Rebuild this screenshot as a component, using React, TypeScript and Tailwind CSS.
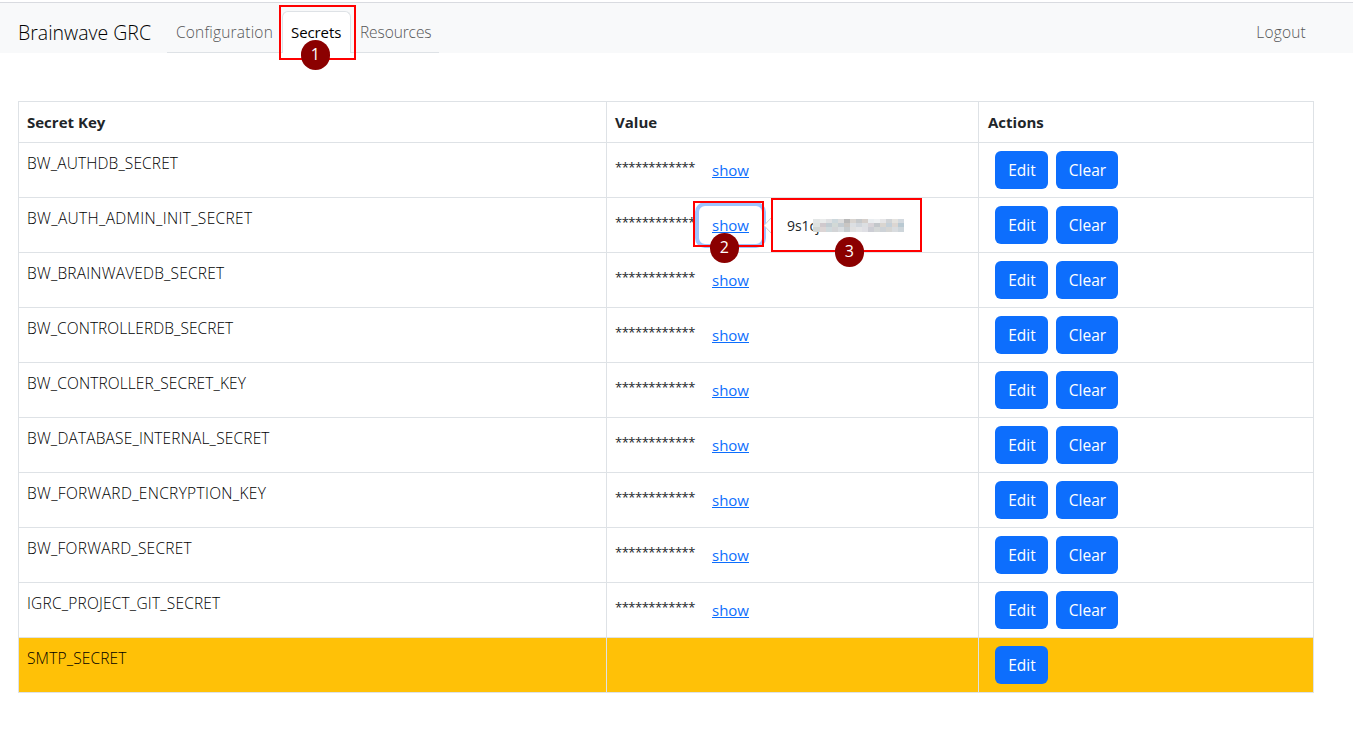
import React from "react";

type Secret = { name: string; tracking: string; empty?: boolean; open?: boolean };

const secrets: Secret[] = [
  { name: "BW_AUTHDB_SECRET", tracking: "tracking-[0.12px]" },
  { name: "BW_AUTH_ADMIN_INIT_SECRET", tracking: "tracking-[0.33px]", open: true },
  { name: "BW_BRAINWAVEDB_SECRET", tracking: "tracking-[0.18px]" },
  { name: "BW_CONTROLLERDB_SECRET", tracking: "tracking-[0.06px]" },
  { name: "BW_CONTROLLER_SECRET_KEY", tracking: "tracking-[0.11px]" },
  { name: "BW_DATABASE_INTERNAL_SECRET", tracking: "tracking-[0.16px]" },
  { name: "BW_FORWARD_ENCRYPTION_KEY", tracking: "tracking-[0.31px]" },
  { name: "BW_FORWARD_SECRET", tracking: "tracking-[0.23px]" },
  { name: "IGRC_PROJECT_GIT_SECRET", tracking: "tracking-[0.19px]" },
  { name: "SMTP_SECRET", tracking: "tracking-[0.15px]", empty: true },
];

const mosaic = [
  "bg-[#e3e6e6]", "bg-[#e9ebeb]", "bg-[#dfe0e2]", "bg-[#cdd8dc]", "bg-[#dcdcdc]", "bg-[#b9b9b9]", "bg-[#d8d4d0]", "bg-[#c6c9cb]", "bg-[#d5cfcb]", "bg-[#e9edf0]", "bg-[#eef0f2]", "bg-[#e5e5e7]", "bg-[#d0d3d6]", "bg-[#e4e2de]", "bg-[#d3d9df]",
  "bg-[#dfe3e1]", "bg-[#d0c9cd]", "bg-[#c2ccd2]", "bg-[#d2d9d6]", "bg-[#c4ccd2]", "bg-[#c9c6c3]", "bg-[#dcdfe2]", "bg-[#d1d6dc]", "bg-[#dcdfe2]", "bg-[#d8d3d8]", "bg-[#c3c7cb]", "bg-[#d9d5d0]", "bg-[#c5d0d8]", "bg-[#dcd6d2]", "bg-[#b9c9d2]",
  "bg-[#d3d7d5]", "bg-[#dcd5d5]", "bg-[#cfd9dc]", "bg-[#d3d4d6]", "bg-[#d9dde0]", "bg-[#c6cbce]", "bg-[#e0e0e0]", "bg-[#e3e4e6]", "bg-[#dfdfe4]", "bg-[#cccdd4]", "bg-[#d4d7d7]", "bg-[#cdd2d7]", "bg-[#d5d5d3]", "bg-[#d9dcdf]", "bg-[#cdd5da]",
];

function Marker({ n, place }: { n: number; place: string }) {
  return (
    <span className={`absolute z-30 flex size-[29.5px] items-center justify-center rounded-full bg-[#8b0000] pb-px font-['Open_Sans',sans-serif] text-[16px] leading-none font-normal text-white ${place}`}>
      {n}
    </span>
  );
}

function ActionButton({ children, width }: { children: string; width: string }) {
  return <button className={`h-[38px] rounded-md bg-[#0d6efd] pt-[2px] pl-px text-[15.5px] font-normal text-white ${width}`}>{children}</button>;
}

function SecretValue() {
  return (
    <>
      <div className="absolute top-[4px] left-[88px] z-10 h-[46px] w-[71px] rounded-[10px] border-4 border-[#9ec5fe] bg-white" />
      <div className="absolute top-[3px] left-[86px] z-20 h-[46px] w-[71px] border-2 border-[#f00]" />
      <Marker n={2} place="top-[35px] left-[102.5px]" />
      <svg className="absolute top-[18px] left-[156px] z-10 h-[20px] w-[9px] fill-white stroke-[#ccc]" viewBox="0 0 9 20">
        <path d="M9 1 1 9.500 9 18" />
      </svg>
      <div className="absolute top-0 left-[164px] z-20 flex h-[54px] w-[151px] items-center border-2 border-[#f00] bg-white pl-[14px] text-[14px]">
        <span className="tracking-[-0.1px]">9s1cj</span>
        <span className="-ml-1.5 grid h-[13px] w-[91px] grid-cols-[repeat(15,1fr)] grid-rows-3">
          {mosaic.map((color, i) => <i key={i} className={color} />)}
        </span>
      </div>
      <Marker n={3} place="top-[39px] left-[227.5px]" />
    </>
  );
}

export default function App() {
  return (
    <div className="h-[731px] w-[1353px] overflow-hidden bg-white pt-[2px] font-['Open_Sans',sans-serif] text-[15px] text-[#212529]">
      <header className="flex h-[51px] border-t border-[#d9dbe0] bg-[#f8f9fa] pl-[18px] font-light">
        <div className="flex w-[149px] items-center pt-2.5 text-[19.5px] text-[#000]">Brainwave GRC</div>
        <nav className="flex h-[50px] w-[272px] text-[15.5px] text-[#555657]">
          <a className="w-[115px] border-b border-[#dee2e6] pt-[18px] pl-[9px] tracking-[0.2px]">Configuration</a>
          <a className="relative mt-2 w-[69px] rounded-t-md border border-b-0 border-[#dee2e6] bg-white pt-[9px] pl-2 text-[15px] font-normal tracking-[-0.1px] text-[#000]">
            Secrets
            <span className="absolute -top-[7px] -left-[4px] h-[55px] w-[77px] border-2 border-[#f00]" />
            <Marker n={1} place="top-[28px] left-[17.5px]" />
          </a>
          <a className="grow border-b border-[#dee2e6] pt-[18px] pl-[9px] tracking-[-0.1px]">Resources</a>
        </nav>
        <a className="mr-[47px] ml-auto pt-[18px] text-[15.5px] tracking-[0.2px] text-[#555657]">Logout</a>
      </header>
      <table className="mt-12 ml-[18px] w-[1296px] table-fixed border-collapse text-left">
        <colgroup>
          <col className="w-[588px]" />
          <col className="w-[372px]" />
          <col />
        </colgroup>
        <thead>
          <tr className="h-[41px]">
            <th className="border border-[#dee2e6] px-2 font-bold">Secret Key</th>
            <th className="border border-[#dee2e6] px-2 font-bold">Value</th>
            <th className="border border-[#dee2e6] pl-[9px] font-bold">Actions</th>
          </tr>
        </thead>
        <tbody>
          {secrets.map((s) => (
            <tr key={s.name} className={`h-[55px] align-top ${s.empty ? "bg-[#ffc107]" : ""}`}>
              <td className={`border border-[#dee2e6] px-2 pt-[9px] text-[15.5px] leading-[22px] font-light text-[#000] ${s.tracking}`}>{s.name}</td>
              <td className="border border-[#dee2e6] p-0">
                {!s.empty && (
                  <div className="relative flex h-[54px] pl-2">
                    <span className="w-[97px] pt-[12px] text-[13px] leading-[24px] tracking-[-0.5px]">************</span>
                    <a className="relative z-[11] pt-[15px] leading-[24px] text-[#0d6efd] underline">show</a>
                    {s.open && <SecretValue />}
                  </div>
                )}
              </td>
              <td className="border border-[#dee2e6] p-0">
                <div className="flex gap-2 pt-2 pl-4">
                  <ActionButton width="w-[53px]">Edit</ActionButton>
                  {!s.empty && <ActionButton width="w-[62px]">Clear</ActionButton>}
                </div>
              </td>
            </tr>
          ))}
        </tbody>
      </table>
    </div>
  );
}
